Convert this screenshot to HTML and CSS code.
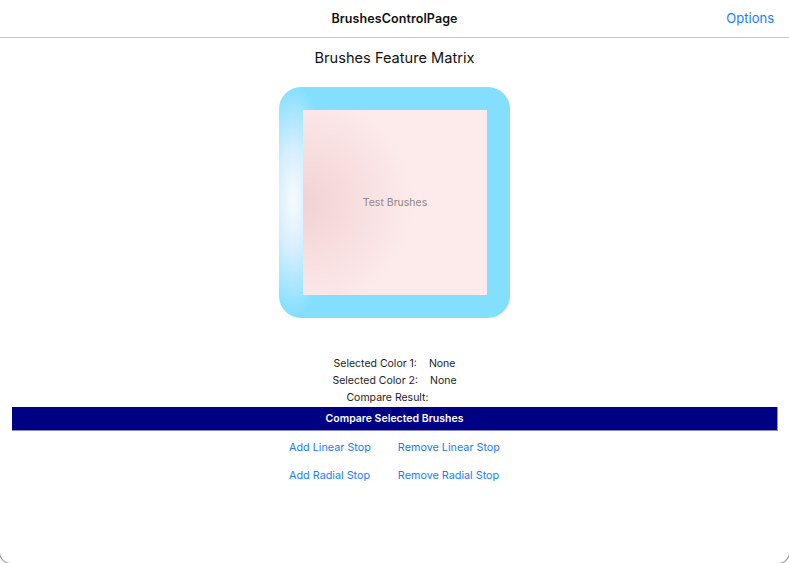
FILE: index.html
```html
<!DOCTYPE html>
<html>
<head>
<meta charset="utf-8">
<link rel="stylesheet" href="styles.css">
</head>
<body>
<div class="window">
  <header class="navbar">
    <div class="nav-title">BrushesControlPage</div>
    <div class="nav-action">Options</div>
  </header>
  <main class="content">
    <h1 class="page-title">Brushes Feature Matrix</h1>
    <div class="brush-frame">
      <div class="brush-inner">Test Brushes</div>
    </div>
    <div class="info">
      <div class="info-row"><span>Selected Color 1:</span><span class="val">None</span></div>
      <div class="info-row"><span>Selected Color 2:</span><span class="val">None</span></div>
      <div class="info-row info-row-result"><span>Compare Result:</span><span class="val"></span></div>
    </div>
    <button class="compare-btn">Compare Selected Brushes</button>
    <div class="links">
      <span class="link">Add Linear Stop</span>
      <span class="link">Remove Linear Stop</span>
      <span class="link">Add Radial Stop</span>
      <span class="link">Remove Radial Stop</span>
    </div>
  </main>
</div>
</body>
</html>
```

FILE: styles.css
```css
html, body {
  margin: 0;
  padding: 0;
  background: #fff;
}
body {
  font-family: Inter, "Noto Sans", "Liberation Sans", sans-serif;
  color: #1c1c1c;
  overflow: hidden;
}
.window {
  height: 563px;
  overflow: hidden;
  border-radius: 0 0 11px 11px;
  box-shadow: 0 0 0 1px #9a9a9a;
  background: #fff;
}
.navbar {
  height: 37px;
  border-bottom: 1px solid #c6c6c6;
  display: flex;
  align-items: center;
  justify-content: center;
  position: relative;
}
.nav-title {
  font-size: 12.5px;
  font-weight: 600;
  color: #111;
  letter-spacing: 0.1px;
}
.nav-action {
  position: absolute;
  right: 15px;
  top: 0;
  line-height: 37px;
  font-size: 13px;
  color: #1a7df6;
}
.content {
  display: flex;
  flex-direction: column;
  align-items: center;
}
.page-title {
  margin: 10px 0 0;
  font-size: 14.6px;
  font-weight: 400;
  line-height: 20px;
  color: #111;
}
.brush-frame {
  margin-top: 19px;
  width: 231px;
  height: 231px;
  box-sizing: border-box;
  padding: 23px 23px 23px 24px;
  border-radius: 22px;
  background:
    radial-gradient(ellipse 36px 115px at 14px 113px, #f6fbff 0%, #d6eeff 45%, #84dffe 100%);
  background-color: #84dffe;
}
.brush-inner {
  width: 100%;
  height: 100%;
  display: flex;
  align-items: center;
  justify-content: center;
  font-size: 10.5px;
  color: #8d8686;
  background: radial-gradient(ellipse 140px 140px at 0% 50%, #f2d2d4 0%, #f8e0e1 45%, #fdebec 80%);
}
.info {
  margin-top: 37px;
  display: flex;
  flex-direction: column;
  align-items: center;
  font-size: 10.5px;
  line-height: 17px;
  color: #1c1c1c;
}
.info-row {
  display: flex;
}
.val {
  margin-left: 12px;
}
.info-row-result {
  padding-right: 2px;
}
.compare-btn {
  margin-top: 1px;
  align-self: stretch;
  margin-left: 12px;
  margin-right: 11px;
  height: 24px;
  border: none;
  border-right: 1px solid #8a8ac8;
  border-bottom: 1px solid #8a8ac8;
  background: #000084;
  color: #fff;
  font-family: inherit;
  font-size: 10.5px;
  font-weight: 600;
  padding: 0;
}
.links {
  margin-top: 8px;
  display: grid;
  grid-template-columns: auto auto;
  column-gap: 27px;
  row-gap: 11px;
  font-size: 10.8px;
  line-height: 17px;
  color: #1a7df6;
}
.link {
  white-space: nowrap;
}
```
